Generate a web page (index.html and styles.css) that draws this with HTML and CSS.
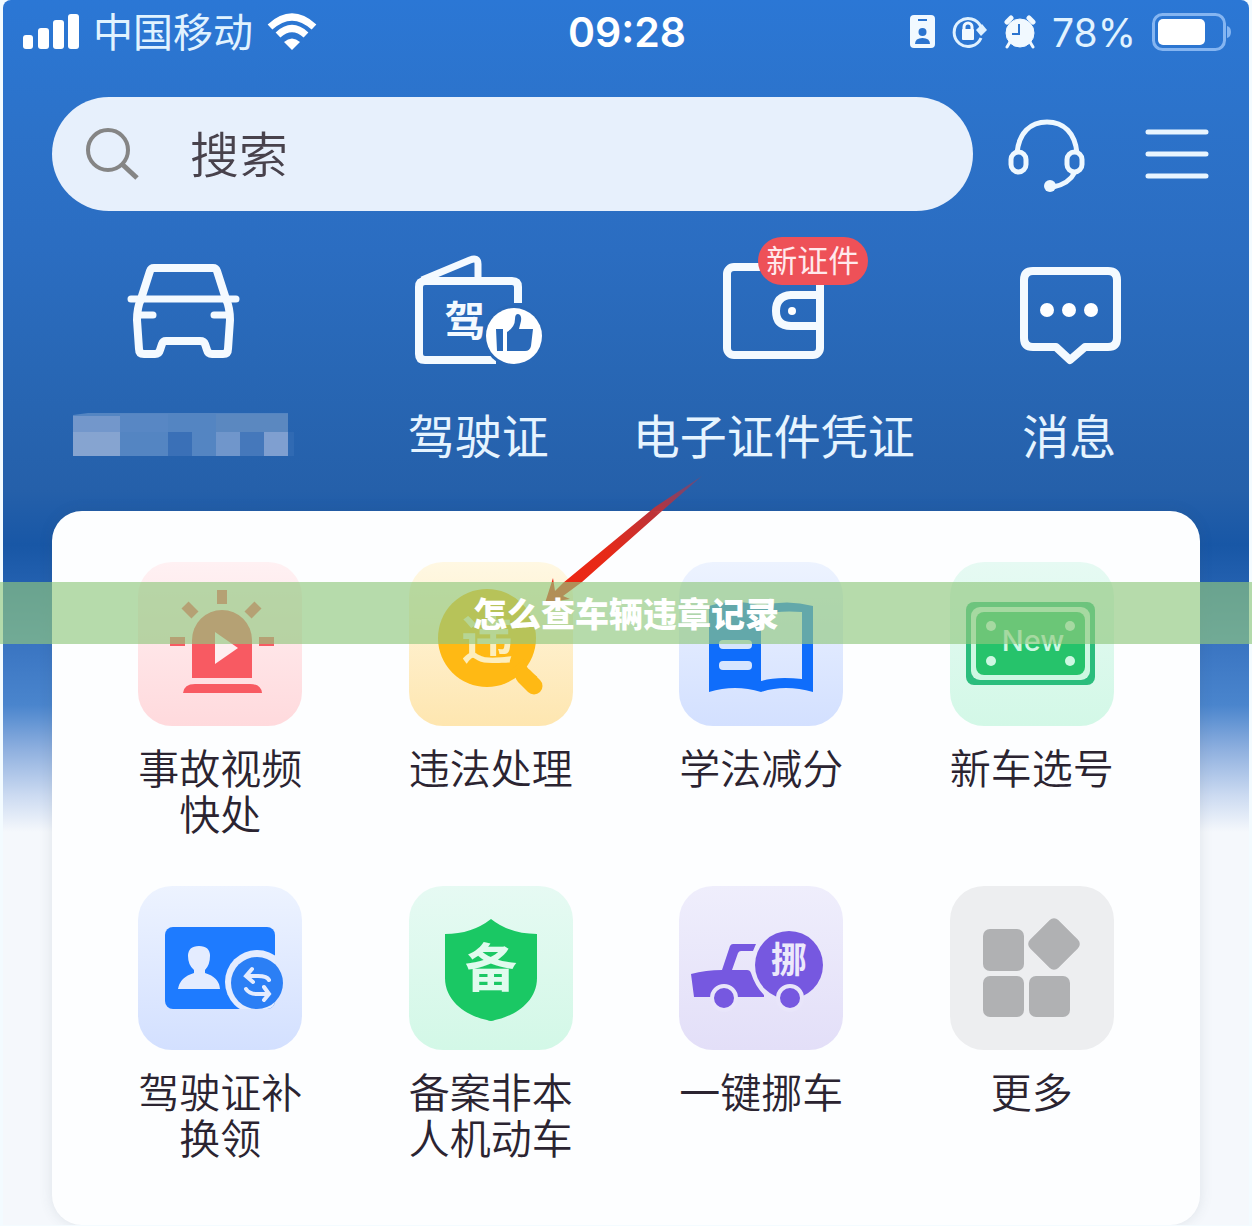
FILE: index.html
```html
<!DOCTYPE html>
<html lang="zh-CN">
<head>
    <meta charset="UTF-8">
    <meta name="viewport" content="width=device-width, initial-scale=1.0">
    <title>怎么查车辆违章记录</title>
    <link rel="stylesheet" href="styles.css">
</head>
<body>
    <div class="screen">
        <header class="status-bar">
            <div class="status-left">
                <svg width="56" height="36" viewBox="0 0 56 36" fill="#fff">
                    <rect x="0" y="21" width="10" height="14" rx="3"/>
                    <rect x="15" y="14" width="11" height="21" rx="3"/>
                    <rect x="30" y="6" width="11" height="29" rx="3"/>
                    <rect x="45" y="0" width="11" height="35" rx="3"/>
                </svg>
                <span class="carrier">中国移动</span>
                <svg width="50" height="38" viewBox="0 0 50 38" fill="none" stroke="#fff" stroke-width="7">
                    <path d="M3 14Q25 -6 47 14"/>
                    <path d="M11 22Q25 9 39 22"/>
                    <path d="M25 37L17 29Q25 22 33 29Z" fill="#fff" stroke="none"/>
                </svg>
            </div>
            <span class="time">09:28</span>
            <div class="status-right">
                <svg width="26" height="34" viewBox="0 0 26 34">
                    <rect width="25" height="33" x="0" y="0" rx="4" fill="#f1f9ff"/>
                    <path d="M8 5H17" stroke="#2b74cf" stroke-width="2"/>
                    <circle cx="12.500" cy="17" r="4" fill="#2b74cf"/>
                    <path d="M5 29Q5 23 12.500 23T20 29Z" fill="#2b74cf"/>
                </svg>
                <svg width="36" height="34" viewBox="0 0 36 34">
                    <path d="M29 23A14 14 0 1 1 29 12" fill="none" stroke="#dff1ff" stroke-width="3"/>
                    <path d="M24 15L30 9L35 15L29 21Z" fill="#dff1ff"/>
                    <rect x="10" y="14" width="12" height="11" rx="1" fill="#f1f9ff"/>
                    <path d="M12 15V12A4 4 0 0 1 20 12V15" fill="none" stroke="#f1f9ff" stroke-width="3"/>
                </svg>
                <svg width="32" height="34" viewBox="0 0 32 34">
                    <g fill="#f1f9ff" stroke="#f1f9ff">
                        <circle cx="16" cy="18" r="14"/>
                        <path d="M6 27L3 32M26 27L29 32" stroke-width="3" stroke-linecap="round"/>
                        <path d="M3 7L7 3M25 3L29 7" stroke-width="5" stroke-linecap="round"/>
                    </g>
                    <path d="M15 9V19H8" fill="none" stroke="#2b74cf" stroke-width="2"/>
                </svg>
                <span class="percent">78%</span>
                <svg width="79" height="38" viewBox="0 0 79 38">
                    <rect x="1.500" y="1.500" width="71" height="35" rx="9" fill="none" stroke="#85b5f1" stroke-width="3"/>
                    <rect x="6" y="6" width="47" height="26" rx="5" fill="#fff"/>
                    <path d="M75 13Q79 14 79 19T75 25Z" fill="#85b5f1"/>
                </svg>
            </div>
        </header>

        <div class="toolbar">
            <label class="search">
                <svg width="54" height="54" viewBox="0 0 54 54" fill="none" stroke="#858585">
                    <circle cx="22" cy="23" r="20" stroke-width="4"/>
                    <path d="M37 38L51 51" stroke-width="5"/>
                </svg>
                <input type="search" placeholder="搜索" aria-label="搜索">
            </label>
            <button class="icon-btn headset" type="button" aria-label="客服">
                <svg width="78" height="78" viewBox="0 -4 78 78" fill="none" stroke="#eef8ff" stroke-width="5">
                    <path d="M9 34C11 14 22 3 39 3S67 14 69 34"/>
                    <rect x="3" y="33" width="15" height="20" rx="7.500"/>
                    <rect x="59" y="33" width="15" height="20" rx="7.500"/>
                    <path d="M67 53Q61 65 45 68"/>
                    <circle cx="42" cy="67" r="6" fill="#eef8ff" stroke="none"/>
                </svg>
            </button>
            <button class="icon-btn menu" type="button" aria-label="菜单">
                <svg width="64" height="52" viewBox="0 0 64 52" stroke="#e8f5ff" stroke-width="5" stroke-linecap="round">
                    <path d="M3 4H61M3 26H61M3 48H61"/>
                </svg>
            </button>
        </div>

        <nav class="quick">
            <a class="quick-item" href="#">
                <svg width="140" height="120" viewBox="113 250 140 120" fill="none" stroke="#f4faff" stroke-width="8" stroke-linecap="round" stroke-linejoin="round">
                    <path d="M154 268H213Q216 268 217 271L226 299Q230 308 230 320L228 349Q228 354 223 354H212Q208 354 207 350L205 344Q204 341 200 341H166Q163 341 162 344L160 350Q159 354 155 354H144Q139 354 139 349L137 320Q137 308 141 299L150 271Q151 268 154 268Z"/>
                    <path d="M131 299H236M139 315H153M214 315H228" stroke-width="7"/>
                </svg>
                <svg class="mosaic" width="222" height="48" viewBox="72 413 222 48">
                    <path d="M73 415L88 413H288V456H73Z" fill="#5485c2"/>
                    <rect x="73" y="416" width="47" height="17" fill="#7397cb"/>
                    <rect x="73" y="432" width="47" height="24" fill="#86a4d0"/>
                    <rect x="120" y="414" width="48" height="18" fill="#5887c4"/>
                    <rect x="216" y="414" width="72" height="18" fill="#5b88c0"/>
                    <rect x="168" y="432" width="24" height="24" fill="#3a70b7"/>
                    <rect x="216" y="432" width="24" height="24" fill="#7096cb"/>
                    <rect x="240" y="432" width="24" height="24" fill="#4578bb"/>
                    <rect x="264" y="432" width="24" height="24" fill="#7f9fd0"/>
                    <rect x="288" y="432" width="6" height="24" fill="#306ab3"/>
                </svg>
            </a>
            <a class="quick-item" href="#">
                <svg width="140" height="120" viewBox="408 250 140 120">
                    <g fill="none" stroke="#f4faff" stroke-width="8" stroke-linejoin="round">
                        <path d="M518 303V287Q518 281 512 281H425Q419 281 419 287V354Q419 360 425 360H496"/>
                        <path d="M422 280L470 260Q478 257 478 264V281" stroke-width="7"/>
                    </g>
                    <text class="glyph" x="465" y="336" font-size="41" fill="#f4faff">驾</text>
                    <circle cx="514" cy="336" r="31" fill="#2968b7"/>
                    <circle cx="514" cy="336" r="28" fill="#fff"/>
                    <path d="M496 329H503V351H497ZM507 351V332Q515 327 515 319Q515 314 518 314Q522 315 521 321L519 329H533L531 346Q530 351 525 351Z" fill="#2a69b8"/>
                </svg>
                <span>驾驶证</span>
            </a>
            <a class="quick-item" href="#">
                <span class="quick-icon">
                    <svg width="140" height="120" viewBox="704 250 140 120" fill="none" stroke="#f4faff" stroke-width="8">
                        <rect x="727" y="267" width="93" height="88" rx="7"/>
                        <path d="M820 295H791Q776 296 776 311T791 326H820"/>
                        <circle cx="792" cy="311" r="4" fill="#fff" stroke="none"/>
                    </svg>
                    <span class="badge">新证件</span>
                </span>
                <span>电子证件凭证</span>
            </a>
            <a class="quick-item" href="#">
                <svg width="140" height="120" viewBox="999 250 140 120" fill="none" stroke="#f4faff" stroke-width="8" stroke-linejoin="round">
                    <path d="M1033 271H1108Q1117 271 1117 280V338Q1117 347 1108 347H1085L1070 360L1056 347H1033Q1024 347 1024 338V280Q1024 271 1033 271Z"/>
                    <g fill="#fff" stroke="none">
                        <circle cx="1047" cy="310" r="7"/>
                        <circle cx="1069" cy="310" r="7"/>
                        <circle cx="1091" cy="310" r="7"/>
                    </g>
                </svg>
                <span>消息</span>
            </a>
        </nav>

        <main class="card">
            <a class="service" href="#">
                <svg class="tile tile-red" viewBox="0 0 164 164">
                    <g fill="#f85a62">
                        <path d="M54 116V78A30 30 0 0 1 114 78V116Z"/>
                        <path d="M45 131Q46 122 57 122H112Q123 122 124 131Z"/>
                        <rect x="79" y="28" width="10" height="14"/>
                        <rect x="32" y="75" width="15" height="9"/>
                        <rect x="121" y="75" width="15" height="9"/>
                        <rect x="45" y="43" width="14" height="10" transform="rotate(45 52 48)"/>
                        <rect x="108" y="43" width="14" height="10" transform="rotate(-45 115 48)"/>
                    </g>
                    <path d="M77 70L100 86L77 102Z" fill="#feeef0"/>
                </svg>
                <span>事故视频快处</span>
            </a>
            <a class="service" href="#">
                <svg class="tile tile-yellow" viewBox="0 0 164 164">
                    <circle cx="78" cy="76" r="49" fill="#ffb914"/>
                    <path d="M104 108Q112 113 119 123L126 115Q117 109 114 100Z" fill="#ffb914" stroke="#ffb914" stroke-width="3"/>
                    <path d="M115 114L125 124" stroke="#ffb914" stroke-width="17" stroke-linecap="round"/>
                    <text class="glyph" x="78" y="97" font-size="52" fill="#fdeebd">违</text>
                </svg>
                <span>违法处理</span>
            </a>
            <a class="service" href="#">
                <svg class="tile tile-blue" viewBox="0 0 164 164">
                    <path fill="#0f6dfb" fill-rule="evenodd" d="M30 44Q56 36 82 44Q108 37 134 44V130Q106 122 82 130Q56 122 30 130ZM82 53Q100 48 123 50V117Q98 114 82 119Z"/>
                    <rect x="40" y="78" width="33" height="9" rx="4" fill="#d5e5ff"/>
                    <rect x="40" y="99" width="33" height="9" rx="4" fill="#d5e5ff"/>
                </svg>
                <span>学法减分</span>
            </a>
            <a class="service" href="#">
                <svg class="tile tile-green" viewBox="0 0 164 164">
                    <rect x="16" y="40" width="129" height="83" rx="8" fill="#2bbd7d"/>
                    <rect x="21" y="45" width="119" height="73" rx="9" fill="#cdf8e2"/>
                    <rect x="26" y="50" width="109" height="63" rx="8" fill="#26c36b"/>
                    <g fill="#cdf8e2">
                        <circle cx="41" cy="64" r="5"/>
                        <circle cx="120" cy="64" r="5"/>
                        <circle cx="41" cy="99" r="5"/>
                        <circle cx="120" cy="99" r="5"/>
                        <text class="plate-text" x="83" y="89">New</text>
                    </g>
                </svg>
                <span>新车选号</span>
            </a>
            <a class="service" href="#">
                <svg class="tile tile-blue" viewBox="0 0 164 164">
                    <clipPath id="licence">
                        <rect x="27" y="41" width="110" height="82" rx="8"/>
                    </clipPath>
                    <rect x="27" y="41" width="110" height="82" rx="8" fill="#1e7bff"/>
                    <g fill="#e4ecff">
                        <path d="M50 70Q50 60 61 60T72 70Q72 79 67 84V87Q81 91 82 103H40Q42 91 56 87V84Q50 79 50 70Z"/>
                        <circle cx="119" cy="96" r="32" clip-path="url(#licence)"/>
                    </g>
                    <circle cx="119" cy="97" r="26" fill="#2b7ff5"/>
                    <g fill="none" stroke="#e4ecff" stroke-width="4" stroke-linecap="round">
                        <path d="M131 94Q129 90 120 90H109M114 83L108 90L115 96"/>
                        <path d="M108 103Q111 108 119 108H130M126 101L131 108L126 114"/>
                    </g>
                </svg>
                <span>驾驶证补换领</span>
            </a>
            <a class="service" href="#">
                <svg class="tile tile-green" viewBox="0 0 164 164">
                    <path d="M82 33Q101 48 128 48V92C128 118 102 131 86 134Q82 136 78 134C62 131 36 118 36 92V48Q63 48 82 33Z" fill="#1ac864"/>
                    <text class="glyph" x="82" y="101" font-size="52" fill="#e0fbee">备</text>
                </svg>
                <span>备案非本人机动车</span>
            </a>
            <a class="service" href="#">
                <svg class="tile tile-purple" viewBox="0 0 164 164">
                    <g fill="#7658e0">
                        <circle cx="110" cy="79" r="34"/>
                        <path d="M12 88Q27 84 43 84L51 60Q52 58 54 58H77L74 65H62Q60 65 59 67L53 84H68Q71 84 72 87Q76 100 85 109V111H15Z"/>
                    </g>
                    <g fill="#7658e0" stroke="#e8e5fa" stroke-width="4">
                        <circle cx="45" cy="112" r="12"/>
                        <circle cx="111" cy="112" r="12"/>
                    </g>
                    <text class="glyph" x="110" y="87" font-size="36" fill="#ece8fb">挪</text>
                </svg>
                <span>一键挪车</span>
            </a>
            <a class="service" href="#">
                <svg class="tile tile-gray" viewBox="0 0 164 164" fill="#b0b1b3">
                    <rect x="33" y="43" width="41" height="42" rx="7"/>
                    <rect x="33" y="90" width="41" height="41" rx="7"/>
                    <rect x="79" y="90" width="41" height="41" rx="7"/>
                    <rect x="84" y="38" width="40" height="40" rx="6" transform="rotate(45 104 58)"/>
                </svg>
                <span>更多</span>
            </a>

            <svg class="pointer" width="165" height="130" viewBox="540 475 165 130">
                <defs>
                    <linearGradient id="arrow" x1="1" y1="0" x2="0" y2="1">
                        <stop offset="0" stop-color="#d02a35" stop-opacity="0.3"/>
                        <stop offset="0.3" stop-color="#bd3338"/>
                        <stop offset="0.6" stop-color="#e62a18"/>
                        <stop offset="1" stop-color="#f02410"/>
                    </linearGradient>
                </defs>
                <path d="M702 476L655 507L563 583L555 591L553 578L545 603L570 599L563 596L582 582L662 511Z" fill="url(#arrow)"/>
            </svg>
        </main>
    </div>

    <h1 class="banner">怎么查车辆违章记录</h1>
</body>
</html>
```

FILE: styles.css
```css
* {
    box-sizing: border-box;
}
body {
    margin: 0;
    position: relative;
    background-color: #f3fbff;
    font-family: "Noto Sans CJK SC", sans-serif;
    color: #2b2431;
}
a {
    color: inherit;
    text-decoration: none;
}
svg {
    display: block;
    flex: none;
}
.screen {
    margin: 0 3px;
    border-radius: 8px 8px 0 0;
    background: #f5f8fc linear-gradient(#2b77d5 0, #2c73cb 110px, #2b6dc1 250px, #2867b5 370px, #2560aa 490px, #1857a6 545px, #2562b1 590px, #3a75c2 645px, #4a85cd 705px, #8fb0df 750px, #cbdaf1 795px, #f5f8fc 832px);
}

/* status bar */
.status-bar {
    display: grid;
    grid-template-columns: 1fr auto 1fr;
    align-items: center;
    height: 64px;
    padding: 0 18px 0 20px;
    color: #fff;
}
.status-left,
.status-right {
    display: flex;
    align-items: center;
}
.status-left {
    gap: 14px;
}
.status-right {
    justify-content: flex-end;
    gap: 16px;
}
.carrier {
    padding-bottom: 4px;
    font-size: 40px;
    line-height: 60px;
    color: #e1f3ff;
}
.time {
    font-family: Inter, sans-serif;
    font-size: 41px;
    font-weight: 600;
}
.percent {
    font-family: Inter, sans-serif;
    font-size: 39px;
    color: #e1f3ff;
}

/* search row */
.toolbar {
    display: flex;
    align-items: center;
    padding: 33px 40px 0 49px;
}
.search {
    flex: 1;
    display: flex;
    align-items: center;
    gap: 50px;
    height: 114px;
    padding: 0 34px;
    border-radius: 57px;
    background-color: #e7f0fc;
}
.search input {
    flex: 1;
    min-width: 0;
    padding: 0 0 6px;
    border: 0;
    outline: 0;
    background: none;
    font-family: inherit;
    font-size: 49px;
    font-weight: 350;
    color: #48424c;
}
.search input::placeholder {
    color: #48424c;
    opacity: 1;
}
.icon-btn {
    padding: 0;
    border: 0;
    background: none;
}
.headset {
    margin-left: 35px;
}
.menu {
    margin-left: 59px;
}

/* shortcuts */
.quick {
    display: grid;
    grid-template-columns: repeat(4, 1fr);
    padding: 39px 32px 47px;
    color: #e6f4ff;
    font-size: 47px;
    line-height: 60px;
}
.quick-item {
    display: flex;
    flex-direction: column;
    align-items: center;
    gap: 34px;
    white-space: nowrap;
}
.quick-icon {
    position: relative;
}
.mosaic {
    margin-top: 9px;
}
.badge {
    position: absolute;
    top: -13px;
    left: 54px;
    width: 110px;
    padding-bottom: 4px;
    border-radius: 24px;
    background-color: #ee5158;
    color: #ffe9ec;
    font-size: 31px;
    line-height: 44px;
    text-align: center;
}
.glyph {
    font-family: "Noto Sans CJK SC", sans-serif;
    font-weight: 700;
    text-anchor: middle;
}
.plate-text {
    font-family: Inter, sans-serif;
    font-size: 29px;
    font-weight: 500;
    text-anchor: middle;
}

/* services */
.card {
    position: relative;
    display: grid;
    grid-template-columns: repeat(4, 1fr);
    row-gap: 51px;
    margin: 0 49px;
    padding: 51px 33px 66px;
    border-radius: 30px;
    background-color: #fdfeff;
    box-shadow: 0 0 14px rgba(60, 70, 90, 0.12);
}
.service {
    display: flex;
    flex-direction: column;
    align-items: center;
    gap: 17px;
    font-size: 41px;
    font-weight: 350;
    line-height: 46px;
    text-align: center;
}
.service span {
    width: 164px;
}
.tile {
    width: 164px;
    height: 164px;
    border-radius: 34px;
}
.tile-red {
    background: linear-gradient(#fff1f3, #ffdadd);
}
.tile-yellow {
    background: linear-gradient(#fff8e3, #fee6b0);
}
.tile-blue {
    background: linear-gradient(#edf3ff, #d3e0ff);
}
.tile-green {
    background: linear-gradient(#e6faf3, #d3f8e7);
}
.tile-purple {
    background: linear-gradient(#efeefc, #e3dff8);
}
.tile-gray {
    background: #edeef0;
}
.pointer {
    position: absolute;
    top: -36px;
    left: 42.5%;
}

/* title strip over the page */
.banner {
    position: absolute;
    top: 582px;
    left: 0;
    right: 0;
    margin: 0;
    background-color: rgba(144, 200, 126, 0.65);
    color: #fff;
    font-size: 34px;
    font-weight: 900;
    line-height: 62px;
    text-align: center;
}
```
